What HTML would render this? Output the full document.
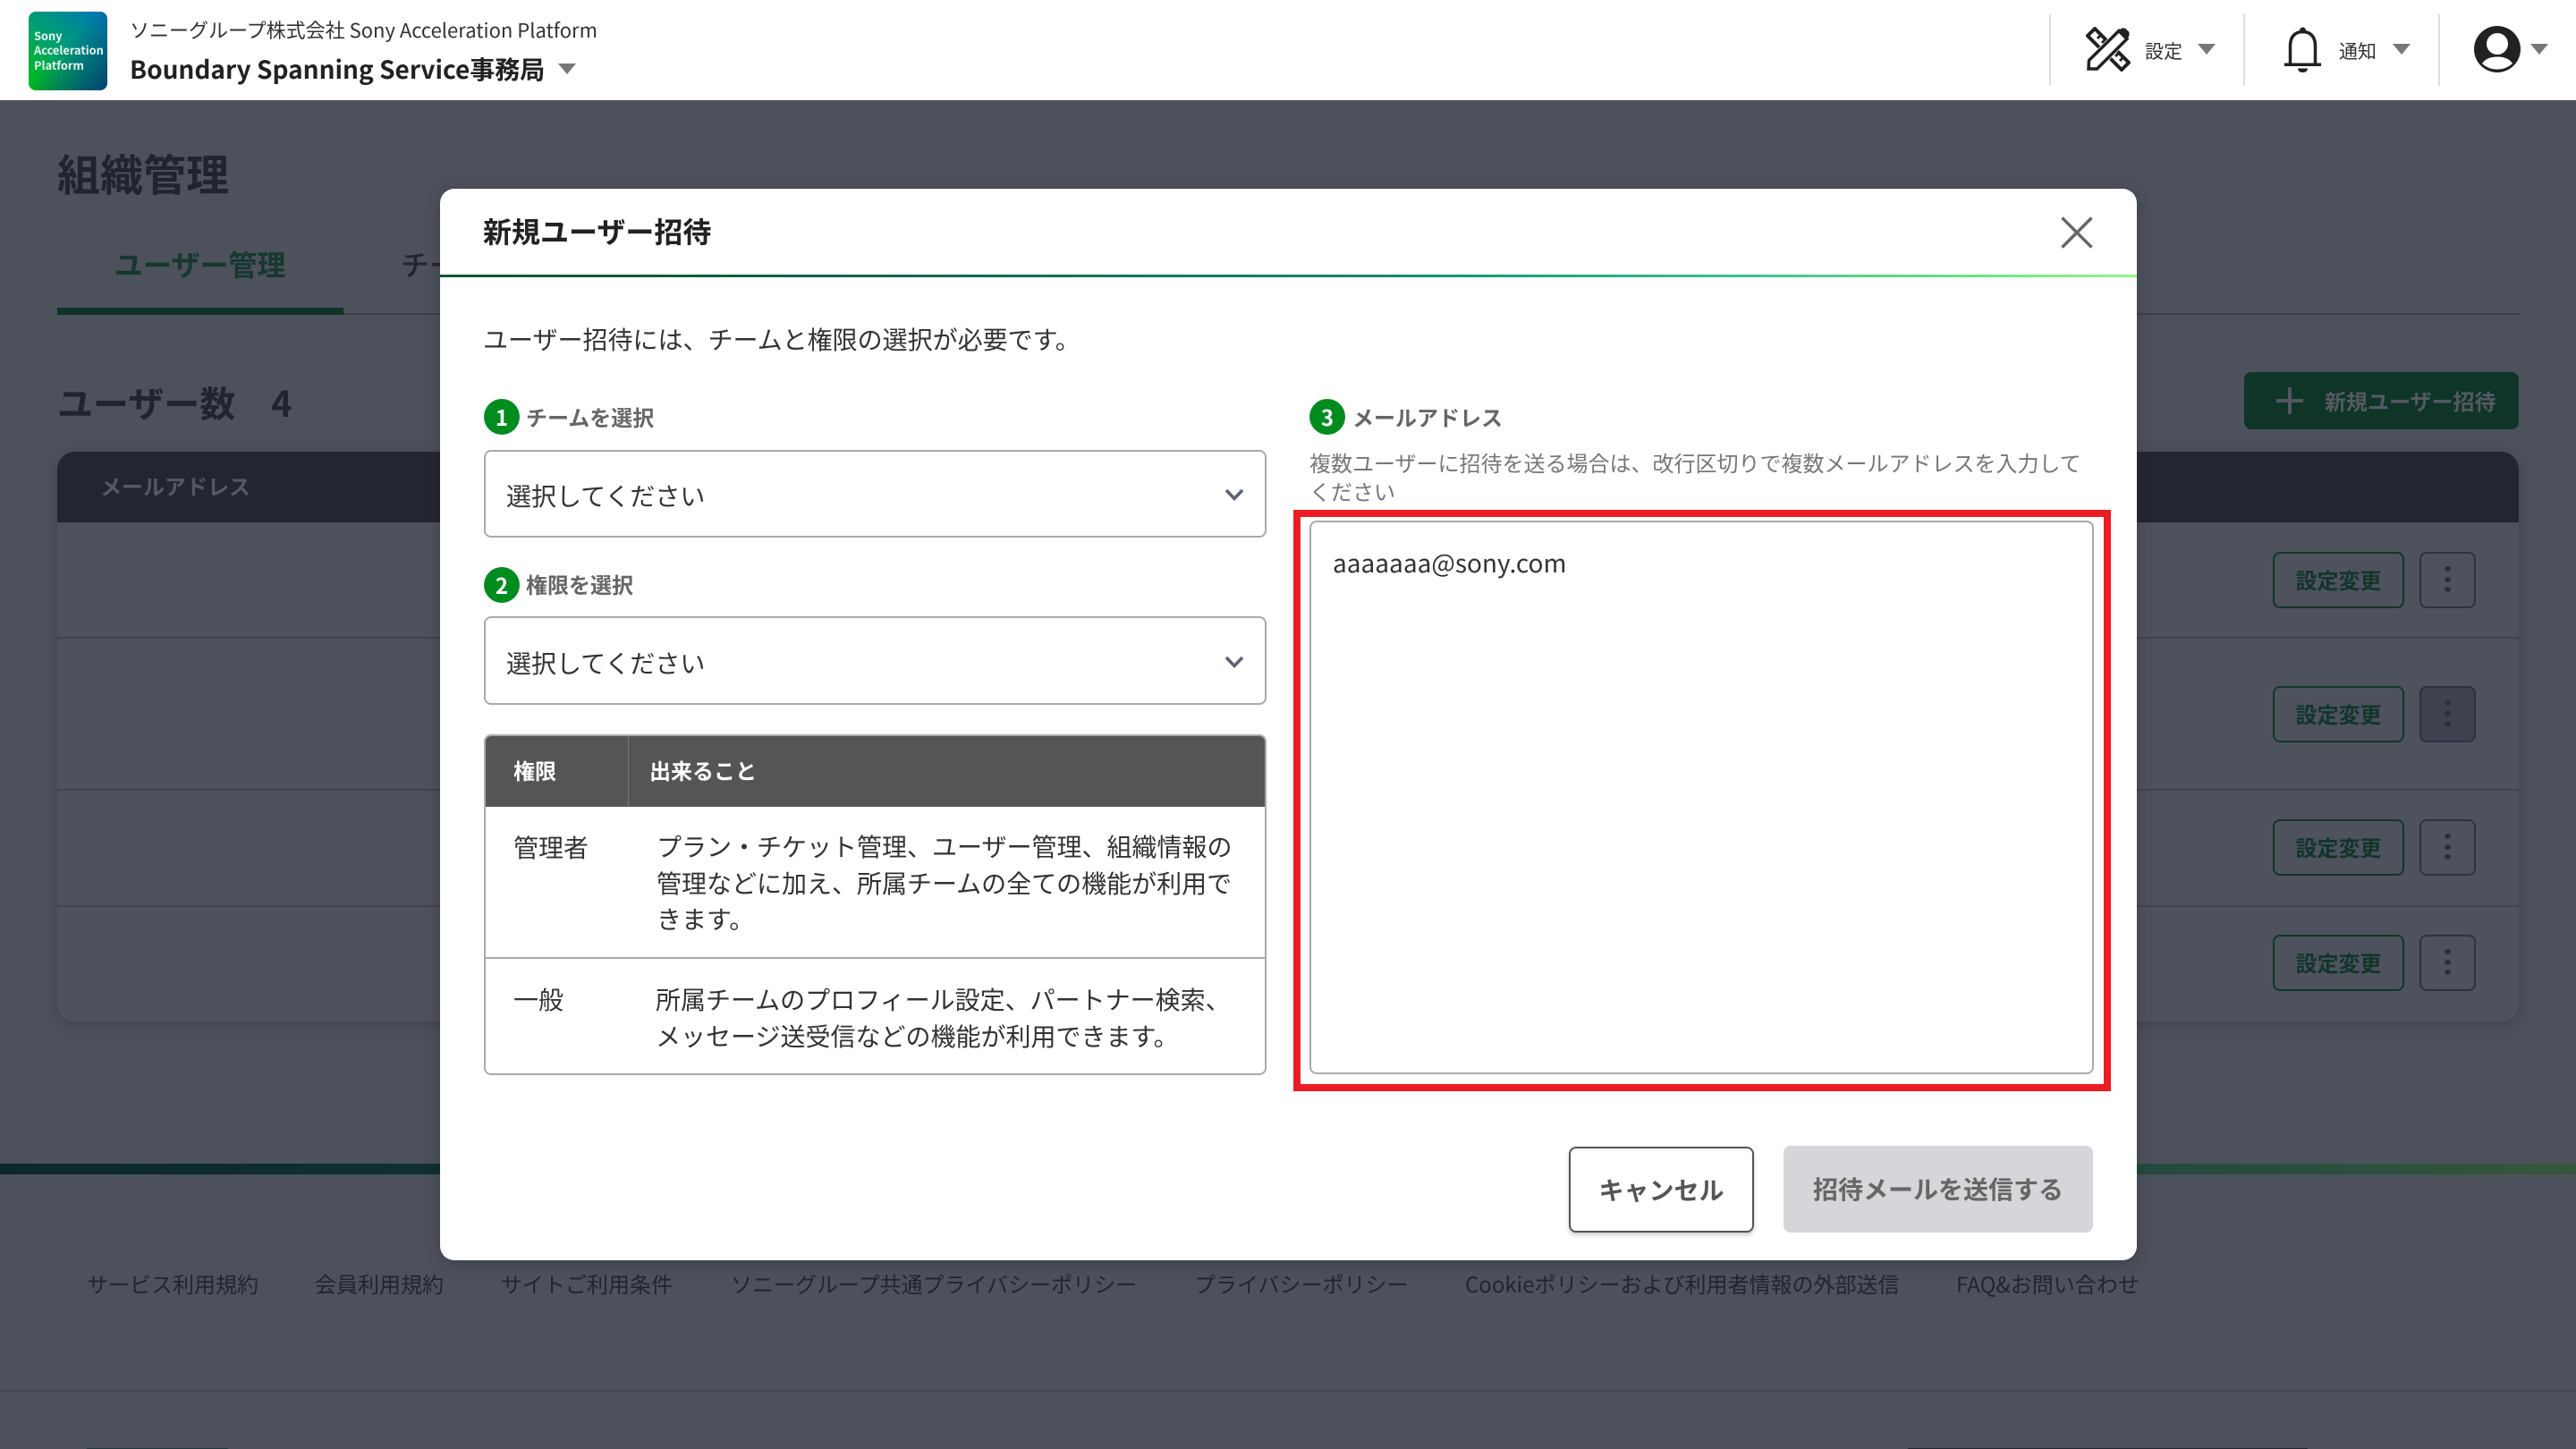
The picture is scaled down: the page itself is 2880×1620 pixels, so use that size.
<!DOCTYPE html>
<html lang="ja"><head><meta charset="utf-8"><title>新規ユーザー招待</title>
<style>
html,body{margin:0;padding:0}
body{width:2880px;height:1620px;position:relative;overflow:hidden;background:#4d515c;font-family:"Noto Sans CJK JP","Liberation Sans",sans-serif;color:#333}
.a{position:absolute;box-sizing:border-box}
.t{position:absolute;white-space:nowrap;margin:0}
.b{font-weight:700}.m{font-weight:500}
.tri{position:absolute;width:0;height:0;border-left:10px solid transparent;border-right:10px solid transparent;border-top:12px solid #777}
.vs{position:absolute;top:16px;width:2px;height:80px;background:#ddd}
.rb{position:absolute;left:2541px;width:147px;height:63px;border:2px solid #12352a;border-radius:8px;box-sizing:border-box;text-align:center;font-size:24px;line-height:57px;font-weight:700;color:#12352a}
.db{position:absolute;left:2705px;width:63px;height:63px;border:2px solid #2d3140;border-radius:8px;box-sizing:border-box}
.db i{position:absolute;left:26px;width:7px;height:6px;border-radius:50%;background:#2b2e3f}
.rl{position:absolute;left:64px;width:2752px;height:2px;background:#41454f}
.fl{position:absolute;top:1417px;font-size:24px;line-height:36px;color:#22252f;white-space:nowrap}
.badge{position:absolute;width:40px;height:40px;border-radius:50%;background:#008c1e;color:#fff;text-align:center;font-size:24px;font-weight:700;line-height:39px}
.lab{position:absolute;top:0;font-size:24px;line-height:36px;font-weight:700;color:#666;white-space:nowrap}
.sel{position:absolute;left:541px;width:875px;border:2px solid #aaa;border-radius:8px;box-sizing:border-box;background:#fff}
</style></head><body>

<div class="t b" style="left:64px;top:156px;font-size:48px;line-height:72px;color:#1f2430">組織管理</div>
<div class="t b" style="left:128px;top:271px;font-size:32px;line-height:48px;color:#17382e">ユーザー管理</div>
<div class="t m" style="left:448px;top:271px;font-size:32px;line-height:48px;color:#22252f">チーム管理</div>
<div class="a" style="left:64px;top:350px;width:2752px;height:2px;background:#3b3f4a"></div>
<div class="a" style="left:64px;top:344px;width:320px;height:8px;background:#103328"></div>

<div class="t b" style="left:64px;top:419px;font-size:40px;line-height:60px;color:#1f2430">ユーザー数</div>
<div class="t b" style="left:303px;top:419px;font-size:40px;line-height:60px;color:#1f2430">4</div>

<div class="a" style="left:2509px;top:416px;width:307px;height:64px;background:#0e3527;border-radius:8px"></div>
<svg class="a" style="left:2545px;top:433px" width="30" height="30"><path d="M0 15H30M15 0V30" stroke="#535761" stroke-width="4"/></svg>
<div class="t b" style="left:2599px;top:430px;font-size:24px;line-height:36px;color:#555963">新規ユーザー招待</div>

<div class="a" style="left:64px;top:505px;width:2752px;height:637px;border-radius:20px;background:#4e525d;box-shadow:0 4px 14px rgba(30,33,42,.25)"></div>
<div class="a" style="left:64px;top:505px;width:2752px;height:79px;border-radius:20px 20px 0 0;background:#222632"></div>
<div class="t b" style="left:112px;top:525px;font-size:24px;line-height:36px;color:#555963">メールアドレス</div>
<div class="rl" style="top:712px"></div><div class="rl" style="top:882px"></div><div class="rl" style="top:1012px"></div>

<div class="rb" style="top:617px">設定変更</div>
<div class="db" style="top:617px"><i style="top:14px"></i><i style="top:26px"></i><i style="top:37px"></i></div>
<div class="rb" style="top:767px">設定変更</div>
<div class="db" style="top:767px;background:#3e424e"><i style="top:14px"></i><i style="top:26px"></i><i style="top:37px"></i></div>
<div class="rb" style="top:916px">設定変更</div>
<div class="db" style="top:916px"><i style="top:14px"></i><i style="top:26px"></i><i style="top:37px"></i></div>
<div class="rb" style="top:1045px">設定変更</div>
<div class="db" style="top:1045px"><i style="top:14px"></i><i style="top:26px"></i><i style="top:37px"></i></div>

<div class="a" style="left:0;top:1301px;width:2880px;height:12px;background:linear-gradient(90deg,#0b292d 0%,#22483f 82%,#35573b 100%)"></div>
<div class="fl" style="left:97px">サービス利用規約</div>
<div class="fl" style="left:352px">会員利用規約</div>
<div class="fl" style="left:560px">サイトご利用条件</div>
<div class="fl" style="left:817px">ソニーグループ共通プライバシーポリシー</div>
<div class="fl" style="left:1335px">プライバシーポリシー</div>
<div class="fl" style="left:1638px">Cookieポリシーおよび利用者情報の外部送信</div>
<div class="fl" style="left:2187px">FAQ&amp;お問い合わせ</div>
<div class="a" style="left:0;top:1554px;width:2880px;height:2px;background:#454954"></div>
<div class="a" style="left:97px;top:1619px;width:158px;height:1px;background:#1d3a3a"></div>
<div class="a" style="left:2133px;top:1619px;width:447px;height:1px;background:#22252f"></div>

<!-- header -->
<div class="a" style="left:0;top:0;width:2880px;height:112px;background:#fff"></div>
<div class="a" style="left:32px;top:13px;width:88px;height:88px;border-radius:8px;background:linear-gradient(135deg,rgba(0,63,122,0) 45%,#004072 100%),linear-gradient(45deg,#00bf10 0%,#00a070 45%,#0072b8 100%)"></div>
<div class="t b" style="left:38px;top:31.500px;font-size:12.800px;line-height:16.500px;color:#e8f4ee">Sony<br>Acceleration<br>Platform</div>
<div class="t" style="left:145px;top:15px;font-size:22px;line-height:36px;color:#333">ソニーグループ株式会社 Sony Acceleration Platform</div>
<div class="t b" style="left:145px;top:55px;font-size:28px;line-height:45px;color:#222">Boundary Spanning Service事務局</div>
<div class="tri" style="left:624px;top:71px"></div>

<div class="vs" style="left:2291px"></div><div class="vs" style="left:2508px"></div><div class="vs" style="left:2726px"></div>

<svg class="a" style="left:2332px;top:30px" width="50" height="50" viewBox="0 0 50 50">
<path d="M10 2L2 10L40 48L48 40z" fill="#fff" stroke="#222" stroke-width="4" stroke-linejoin="miter"/>
<path d="M17 9L13 13M22 14L18 18M37 29L33 33M42 34L38 38" fill="none" stroke="#222" stroke-width="3"/>
<path d="M3 47L3.500 37.500L37 4.500L46 13.500L12.500 47z" fill="#fff" stroke="#fff" stroke-width="5" stroke-linejoin="round"/>
<path d="M3 47L3.500 37.500L37 4.500L46 13.500L12.500 47z" fill="#fff" stroke="#222" stroke-width="3.500" stroke-linejoin="miter"/>
<path d="M35.500 5.500L40 1.500H44L48.500 6V10L45 14.500z" fill="#222"/>
<path d="M2 48.500V41.500L8.500 48.500z" fill="#222"/>
</svg>
<div class="t" style="left:2398px;top:40px;font-size:21px;line-height:34px;color:#333">設定</div>
<div class="tri" style="left:2457px;top:49px"></div>

<svg class="a" style="left:2554px;top:30px" width="41" height="51" viewBox="0 0 41 51">
<circle cx="20.500" cy="4" r="3.500" fill="#222"/>
<path d="M6.500 42V21C6.500 11 12 5.500 20.500 5.500S34.500 11 34.500 21V42" fill="none" stroke="#222" stroke-width="3.500"/>
<rect x="0" y="40.500" width="41" height="3.500" fill="#222"/>
<path d="M15 46.500H26C26 49.500 23.500 51 20.500 51S15 49.500 15 46.500z" fill="#222"/>
</svg>
<div class="t" style="left:2615px;top:40px;font-size:21px;line-height:34px;color:#333">通知</div>
<div class="tri" style="left:2675px;top:49px"></div>

<svg class="a" style="left:2766px;top:29px" width="52" height="52" viewBox="0 0 52 52">
<circle cx="26" cy="26" r="26" fill="#222"/>
<circle cx="26" cy="20" r="12" fill="#fff"/>
<path d="M9 42Q14 34.500 26 34.500T43 42Q36 48.500 26 48.500T9 42z" fill="#fff"/>
</svg>
<div class="tri" style="left:2829px;top:49px"></div>

<!-- modal -->
<div class="a" style="left:492px;top:211px;width:1897px;height:1198px;background:#fff;border-radius:16px;box-shadow:0 4px 16px rgba(30,33,42,.35)"></div>
<div class="t b" style="left:540px;top:234px;font-size:32px;line-height:48px;color:#222">新規ユーザー招待</div>
<svg class="a" style="left:2304px;top:242px" width="36" height="36"><path d="M1.500 1.500L34.500 34.500M34.500 1.500L1.500 34.500" stroke="#666" stroke-width="3.500"/></svg>
<div class="a" style="left:492px;top:307px;width:1897px;height:3px;background:linear-gradient(90deg,#05562f 0%,#06694a 30%,#0a8a6a 55%,#3fc58a 78%,#8cfb7c 100%)"></div>

<div class="t" style="left:540px;top:358px;font-size:28px;line-height:42px;color:#333">ユーザー招待には、チームと権限の選択が必要です。</div>

<div class="badge" style="left:541px;top:446px">1</div>
<div class="lab" style="left:588px;top:448px">チームを選択</div>
<div class="sel" style="top:503px;height:98px"></div>
<div class="t" style="left:566px;top:533px;font-size:28px;line-height:42px;color:#333">選択してください</div>
<svg class="a" style="left:1369px;top:546px" width="22" height="14"><path d="M2 2L11 11.500L20 2" fill="none" stroke="#5b6270" stroke-width="3.500"/></svg>

<div class="badge" style="left:541px;top:634px">2</div>
<div class="lab" style="left:588px;top:635px">権限を選択</div>
<div class="sel" style="top:689px;height:99px"></div>
<div class="t" style="left:566px;top:720px;font-size:28px;line-height:42px;color:#333">選択してください</div>
<svg class="a" style="left:1369px;top:733px" width="22" height="14"><path d="M2 2L11 11.500L20 2" fill="none" stroke="#5b6270" stroke-width="3.500"/></svg>

<div class="a" style="left:541px;top:821px;width:875px;height:381px;border:2px solid #aaa;border-radius:8px;overflow:hidden;background:#fff">
<div class="a" style="left:0;top:0;width:875px;height:79px;background:#555"></div>
<div class="a" style="left:159px;top:0;width:1px;height:79px;background:#777"></div>
<div class="a" style="left:0;top:247px;width:875px;height:2px;background:#aaa"></div>
</div>
<div class="t b" style="left:574px;top:843px;font-size:24px;line-height:36px;color:#fff">権限</div>
<div class="t b" style="left:726px;top:843px;font-size:24px;line-height:36px;color:#fff">出来ること</div>
<div class="t" style="left:574px;top:926px;font-size:28px;line-height:42px;color:#333">管理者</div>
<div class="t" style="left:734px;top:926px;font-size:28px;line-height:40.500px;color:#333">プラン・チケット管理、ユーザー管理、組織情報の<br>管理などに加え、所属チームの全ての機能が利用で<br>きます。</div>
<div class="t" style="left:574px;top:1096px;font-size:28px;line-height:42px;color:#333">一般</div>
<div class="t" style="left:733px;top:1097px;font-size:28px;line-height:40.500px;color:#333">所属チームのプロフィール設定、パートナー検索、<br>メッセージ送受信などの機能が利用できます。</div>

<div class="badge" style="left:1464px;top:446px">3</div>
<div class="lab" style="left:1512px;top:448px">メールアドレス</div>
<div class="t" style="left:1464px;top:501px;font-size:24px;line-height:32px;color:#777">複数ユーザーに招待を送る場合は、改行区切りで複数メールアドレスを入力して<br>ください</div>
<div class="a" style="left:1446px;top:570px;width:914px;height:650px;border:8px solid #ed1c24"></div>
<div class="a" style="left:1464px;top:582px;width:877px;height:619px;border:2px solid #aaa;border-radius:8px;background:#fff"></div>
<div class="t" style="left:1490px;top:608px;font-size:28px;line-height:42px;color:#333">aaaaaaa@sony.com</div>

<div class="a" style="left:1754px;top:1282px;width:207px;height:96px;border:2px solid #555;border-radius:8px;background:#fff;box-shadow:0 3px 5px rgba(0,0,0,.2);text-align:center;font-size:28px;font-weight:700;line-height:92px;color:#555">キャンセル</div>
<div class="a" style="left:1994px;top:1281px;width:346px;height:97px;border-radius:8px;background:#d5d6da;text-align:center;font-size:28px;font-weight:700;line-height:96px;color:#666">招待メールを送信する</div>

</body></html>
